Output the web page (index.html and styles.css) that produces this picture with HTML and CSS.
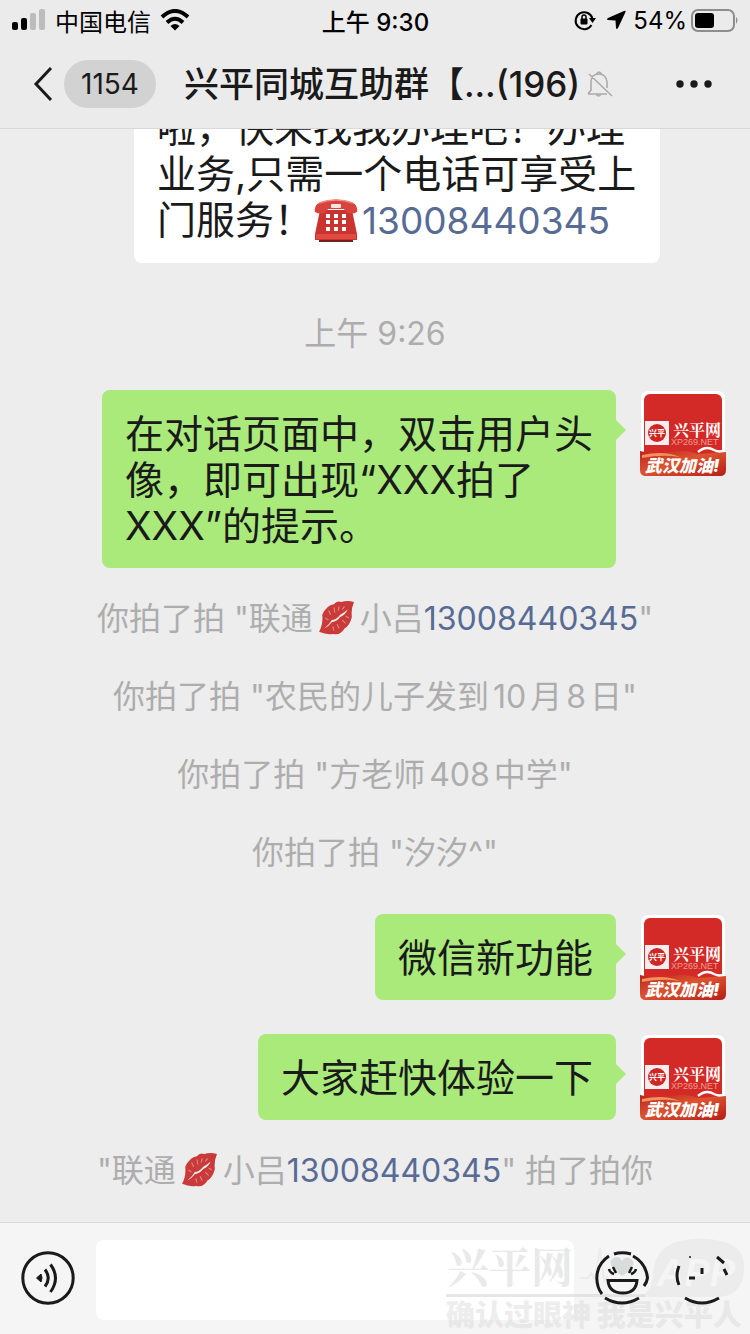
FILE: index.html
```html
<!DOCTYPE html>
<html lang="zh-CN">
<head>
<meta charset="utf-8">
<meta name="viewport" content="width=device-width">
<title>兴平同城互助群</title>
<link rel="stylesheet" href="styles.css">
</head>
<body>
<svg class="defs" aria-hidden="true">
  <defs>
    <linearGradient id="banner" x1="0" y1="0" x2="1" y2="1">
      <stop offset="0" stop-color="#b9241c"/><stop offset=".45" stop-color="#dd5330"/><stop offset="1" stop-color="#b51d18"/>
    </linearGradient>
    <symbol id="avatar" viewBox="0 0 86 86">
      <rect x="1" y="1" width="84" height="84" rx="7" fill="#fff"/>
      <rect x="4" y="4" width="78" height="76" rx="6" fill="#d32a27"/>
      <rect x="5" y="31" width="24" height="24" fill="#f6eeee"/>
      <circle cx="17" cy="43" r="9" fill="#cf2524"/>
      <text x="9" y="46" font-size="8" font-weight="700" fill="#fff">兴平</text>
      <text x="33" y="46" font-size="16" font-weight="700" class="serif" fill="#fff">兴平网</text>
      <text x="31" y="55" font-size="9" class="latin" fill="#f09a92">XP269.NET</text>
      <path d="M0 61 Q14 65 30 62 T58 64 L86 62 V80 Q86 86 80 86 H6 Q0 86 0 80Z" fill="url(#banner)"/>
      <path d="M2 65 Q24 60 40 67 Q22 64 2 68Z" fill="#f3925c"/>
      <path d="M58 62 Q66 55 74 60 Q80 63 84 60" fill="none" stroke="#fff" stroke-width="2.5"/>
      <text x="5" y="82" font-size="17" font-weight="900" font-style="italic" fill="#fff">武汉加油!</text>
    </symbol>
    <symbol id="kiss" viewBox="0 0 34 32">
      <path d="M1 29 Q5 22 4 13 Q8 4 15 3 Q18 -1 22 1 Q28 -1 34 1 Q31 8 32 15 Q30 23 25 26 Q21 33 14 31 Q8 32 1 29Z" fill="#c93a39"/>
      <path d="M6 26 Q11 22 13 18 Q17 18 21 13 Q25 11 28 8 Q26 13 21 15 Q18 19 13 20 Q10 24 6 26Z" fill="#ededed"/>
      <path d="M10 9l2 4M15 6l1 5M20 5l-1 4M25 5l-2 3M7 16l3 2M14 24l1 4M18 22l2 4M23 18l3 3M26 14l3 2" stroke="#dc8c8c" stroke-width="1" fill="none"/>
    </symbol>
  </defs>
</svg>

<header class="top">
  <div class="status">
    <div class="side">
      <svg width="34" height="24" viewBox="0 0 34 24" aria-label="信号">
        <rect x="0" y="14" width="6" height="8" rx="2"/><rect x="9" y="10" width="6" height="12" rx="2"/>
        <rect x="18" y="5" width="6" height="17" rx="2" fill="#bcbcbc"/><rect x="27" y="1" width="6" height="21" rx="2" fill="#bcbcbc"/>
      </svg>
      <span class="carrier">中国电信</span>
      <svg width="30" height="22" viewBox="0 0 30 22" fill="none" stroke="#000" stroke-width="4" aria-label="无线网络">
        <path d="M2 8 Q15 -4 28 8"/><path d="M7 13.500 Q15 6 23 13.500"/>
        <path d="M10.500 17 Q15 13 19.500 17 L15 21.500Z" fill="#000" stroke="none"/>
      </svg>
    </div>
    <time class="clock">上午 9:30</time>
    <div class="side end">
      <svg width="22" height="22" viewBox="0 0 22 22" aria-label="方向锁定">
        <path d="M17.500 16 A8.500 8.500 0 1 1 18.500 10" fill="none" stroke="#000" stroke-width="2"/>
        <path d="M15 9h7l-3.500 5z"/><rect x="6.500" y="9.500" width="7" height="6" rx="1"/>
        <path d="M8 10V8a2 2 0 0 1 4 0v2" fill="none" stroke="#000" stroke-width="1.500"/>
      </svg>
      <svg class="arrow" width="20" height="20" viewBox="0 0 20 20" aria-label="定位"><path d="M18 1 Q20 0 19.500 2 L12 18 Q10.500 20 10 18 L9.500 10.500 L2 10 Q0 9.500 2 8Z"/></svg>
      <span>54%</span>
      <svg width="48" height="24" viewBox="0 0 48 24" aria-label="电量">
        <rect x="1" y="2" width="42" height="21" rx="6" fill="none" stroke="#8d8d8d" stroke-width="2"/>
        <rect x="4" y="5" width="19" height="15" rx="3"/><path d="M45 9 q3 3 0 7z" fill="#8d8d8d"/>
      </svg>
    </div>
  </div>
  <nav class="nav">
    <button class="back" aria-label="返回">
      <svg width="20" height="36" viewBox="0 0 20 36" fill="none" stroke="#1a1a1a" stroke-width="3"><path d="M18 2 L3 18 L18 34"/></svg>
      <span class="count">1154</span>
    </button>
    <h1 class="title">兴平同城互助群【...(196)</h1>
    <svg class="mute" width="26" height="28" viewBox="0 0 26 28" fill="none" stroke="#ababab" stroke-width="1.600" aria-label="消息免打扰">
      <path d="M1 24H20M4 21V12Q4 4 12 4Q19 4 20 12V18M9 5Q12 -1 15 5M9 24Q12 28 14 24M2 4L25 26M4 20L1 24"/>
    </svg>
    <button class="more" aria-label="更多">
      <svg width="36" height="8" viewBox="0 0 36 8" fill="#1a1a1a"><circle cx="4" cy="4" r="3.700"/><circle cx="18" cy="4" r="3.700"/><circle cx="32" cy="4" r="3.700"/></svg>
    </button>
  </nav>
</header>

<main class="chat">
  <div class="message received">
    <p class="bubble">啦，快来找我办理吧！办理业务,只需一个电话可享受上门服务！<svg class="phone" width="44" height="44" viewBox="0 0 44 44" aria-label="电话"><path d="M6 12H38L43 36V42H1V36Z" fill="#c93431"/><path d="M1 14Q-1 5 11 3Q22 0 33 3Q45 5 43 14Q38 17 32 14L30 11H14L12 14Q6 17 1 14Z" fill="#d9433d"/><path d="M5 5Q22 -1 39 5" fill="none" stroke="#ee8b80" stroke-width="1.500"/><rect x="17" y="6" width="10" height="4" rx="1" fill="#f8e5e1"/><path d="M2 36H42V41H2Z" fill="#e04a43"/><path d="M5 42H39V44H5Z" fill="#6d2421"/><path d="M12 16h4v4h-4zM20 16h4v4h-4zM28 16h4v4h-4zM12 22h4v4h-4zM20 22h4v4h-4zM28 22h4v4h-4zM12 29h4v4h-4zM20 29h4v4h-4zM28 29h4v4h-4z" fill="#fff"/></svg><a href="tel:13008440345">13008440345</a></p>
  </div>
  <time class="stamp">上午 9:26</time>
  <div class="message sent">
    <p class="bubble">在对话页面中，双击用户头像，即可出现“XXX拍了XXX”的提示。</p>
    <svg class="avatar" aria-label="兴平网"><use href="#avatar"/></svg>
  </div>
  <p class="notice">你拍了拍 "联通<svg class="kiss"><use href="#kiss"/></svg>小吕<a href="tel:13008440345">13008440345</a>"</p>
  <p class="notice spaced">你拍了拍 "农民的儿子发到10月8日"</p>
  <p class="notice spaced">你拍了拍 "方老师408中学"</p>
  <p class="notice">你拍了拍 "汐汐^"</p>
  <div class="message sent">
    <p class="bubble">微信新功能</p>
    <svg class="avatar" aria-label="兴平网"><use href="#avatar"/></svg>
  </div>
  <div class="message sent">
    <p class="bubble">大家赶快体验一下</p>
    <svg class="avatar" aria-label="兴平网"><use href="#avatar"/></svg>
  </div>
  <p class="notice">"联通<svg class="kiss"><use href="#kiss"/></svg>小吕<a href="tel:13008440345">13008440345</a>" 拍了拍你</p>
</main>

<footer class="composer">
  <button class="tool" aria-label="语音">
    <svg width="54" height="54" viewBox="0 0 54 54" fill="none" stroke="#1a1a1a" stroke-width="3">
      <circle cx="27" cy="27" r="25.200"/><path d="M15.500 27L20 23Q22 27 20 31Z" fill="#1a1a1a" stroke-width="1"/>
      <path d="M24 18.500Q30.500 27 24 35.500M29.500 13.500Q39.500 27 29.500 41"/>
    </svg>
  </button>
  <input class="field" type="text" aria-label="输入消息">
  <div class="tools">
    <button class="tool" aria-label="表情">
      <svg width="54" height="54" viewBox="0 0 54 54" fill="none" stroke="#1a1a1a" stroke-width="3">
        <path d="M19 3Q27 .5 36 3M38 5Q51 12 52.500 27Q52 31 49 35M14 5Q2 13 1.800 27Q2 37 7 43M10 47Q27 57 44 47"/>
        <path d="M13 29.500H42Q41 42 28 42Q14 42 13 29.500Z"/>
        <path d="M18 16L21 22M14 18Q15 22 19 23M37 16L34 22M41 18Q40 22 36 23" stroke-width="2.500"/>
      </svg>
    </button>
    <button class="tool" aria-label="更多功能">
      <svg width="54" height="54" viewBox="0 0 54 54" fill="none" stroke="#1a1a1a" stroke-width="3">
        <path d="M4 15Q0 25 4 34M10 47Q27 57 44 47M14 27H20M27 17V23M42 6L49 12M49 18L52 24"/><path d="M14 6H16" stroke-width="1.500"/>
      </svg>
    </button>
  </div>
  <svg class="watermark" width="310" height="104" viewBox="0 0 310 104" aria-hidden="true">
    <path d="M6 64H205V67H6Z" fill="#dcdcdc" opacity=".7"/>
    <path d="M213 44Q214 20 236 12Q260 5 285 12Q304 18 304 37Q304 66 278 67H200Q213 60 213 44Z" fill="#dcdcdc" opacity=".38"/>
    <text x="7" y="53" font-size="42" font-weight="700" class="serif" fill="#dcdcdc" opacity=".6">兴平网</text>
    <path d="M140 48H148L151 43L155 50L160 18L164 51L168 46" fill="none" stroke="#ececec" stroke-width="2"/>
    <path d="M182 46Q165 34 173 28Q179 25 182 31Q186 25 191 29Q199 35 182 46Z" fill="#d8dcdc"/>
    <text x="217" y="56" font-size="38" font-weight="900" font-style="italic" class="latin" fill="#f5f5f5">APP</text>
    <text x="6" y="96" font-size="29" font-weight="900" fill="#dcdcdc" opacity=".5">确认过眼神 我是兴平人</text>
  </svg>
</footer>
</body>
</html>
```

FILE: styles.css
```css
* {
  box-sizing: border-box;
}

body {
  margin: 0;
  height: 100vh;
  display: flex;
  flex-direction: column;
  background: #ededed;
  color: #1a1a1a;
  font-family: Inter, "Noto Sans CJK SC", sans-serif;
}

p,
h1 {
  margin: 0;
}

button {
  padding: 0;
  border: 0;
  background: none;
  color: inherit;
  font: inherit;
}

a {
  color: #576b95;
  text-decoration: none;
}

.defs {
  position: absolute;
  width: 0;
  height: 0;
}

.serif {
  font-family: "Noto Serif CJK SC", "Noto Sans CJK SC", serif;
}

.latin {
  font-family: "Liberation Sans", sans-serif;
}

/* Status bar and navigation */
.top {
  flex: none;
  background: #ebebeb;
  border-bottom: 1px solid #d8d8d8;
}

.status {
  display: grid;
  grid-template-columns: 1fr auto 1fr;
  align-items: center;
  height: 40px;
  padding: 0 11px 0 12px;
  color: #000;
  font-size: 24px;
}

.side {
  display: flex;
  align-items: center;
  gap: 9px;
}

.end {
  justify-content: flex-end;
  gap: 4px;
}

.arrow {
  margin: 0 3px 0 6px;
}

.clock {
  font-weight: 500;
}

.nav {
  display: flex;
  align-items: center;
  height: 88px;
  padding: 0 38px 0 33px;
}

.back {
  display: flex;
  align-items: center;
  gap: 11px;
}

.count {
  height: 48px;
  padding: 0 17px;
  border-radius: 24px;
  background: #d2d2d2;
  font-size: 28px;
  line-height: 49px;
}

.title {
  margin-left: 28px;
  font-size: 35px;
  font-weight: 500;
  line-height: 46px;
  white-space: nowrap;
}

.mute {
  margin-left: 7px;
}

.more {
  margin-left: auto;
  display: flex;
}

/* Conversation, anchored to its newest entry */
.chat {
  flex: 1;
  min-height: 0;
  overflow: hidden;
  display: flex;
  flex-direction: column;
  justify-content: flex-end;
}

.message {
  flex: none;
  display: flex;
  align-items: flex-start;
  gap: 24px;
  margin: 5px 24px 29px;
}

.sent {
  justify-content: flex-end;
}

.received {
  padding-left: 110px;
}

.bubble {
  position: relative;
  max-width: 526px;
  padding: 21px 23px 19px;
  border-radius: 8px;
  background: #fff;
  font-size: 39px;
  line-height: 46px;
}

.bubble a {
  font-size: 37px;
}

.sent .bubble {
  max-width: 514px;
  background: #a9ea7a;
}

.sent .bubble::after {
  content: "";
  position: absolute;
  top: 30px;
  left: 100%;
  border: 10px solid transparent;
  border-left-color: #a9ea7a;
  border-right: 0;
}

.avatar {
  flex: none;
  width: 86px;
  height: 86px;
}

.phone {
  margin: 0 4px 0 1px;
  vertical-align: -8px;
}

.stamp,
.notice {
  flex: none;
  margin-bottom: 34px;
  color: #adadad;
  font-size: 32px;
  line-height: 44px;
  text-align: center;
}

.spaced {
  text-autospace: normal;
}

.stamp {
  margin: 20px 0 29px;
}

.notice:last-child {
  margin-bottom: 29px;
}

.kiss {
  width: 36px;
  height: 34px;
  margin: 0 6px 0 5px;
  vertical-align: -5px;
}

/* Message composer */
.composer {
  position: relative;
  flex: none;
  display: flex;
  align-items: center;
  gap: 21px;
  padding: 17px 21px 14px;
  border-top: 1px solid #d8d8d8;
  background: #f5f5f5;
}

.tool {
  display: flex;
  margin-bottom: 4px;
}

.field {
  flex: 1;
  min-width: 0;
  height: 80px;
  padding: 0 20px;
  border: 0;
  border-radius: 8px;
  background: #fff;
  font: inherit;
  font-size: 34px;
}

.tools {
  position: relative;
  z-index: 1;
  display: flex;
  gap: 26px;
}

.watermark {
  position: absolute;
  right: 0;
  bottom: 0;
  pointer-events: none;
}
```
